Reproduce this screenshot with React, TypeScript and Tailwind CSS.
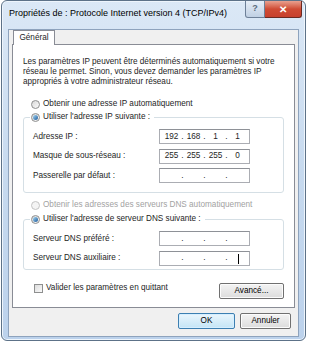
import React from "react";

const font = { fontFamily: '"Liberation Sans", Arial, sans-serif' };

function Radio({ checked, disabled }: { checked?: boolean; disabled?: boolean }) {
  return (
    <span
      className={`flex h-[9px] w-[9px] shrink-0 items-center justify-center rounded-full border ${
        disabled ? "border-[#c4c4c4] bg-[#f4f4f4]" : "border-[#8e8f8f] bg-gradient-to-br from-[#d8d8d8] to-[#fbfbfb]"
      }`}
    >
      {checked && <span className="h-[5px] w-[5px] rounded-full bg-gradient-to-br from-[#a6d9f4] to-[#1b5a9a]" />}
    </span>
  );
}

function IpField({ parts }: { parts?: string[] }) {
  const p = parts ?? ["", "", "", ""];
  return (
    <div className="flex h-[15px] w-[91px] items-center border border-[#abadb3] border-t-[#8e9197] bg-white pl-[3px] text-[8.2px] text-[#1e1e1e]">
      {p.map((v, i) => (
        <React.Fragment key={i}>
          <span className="w-[17px] text-center">{v}</span>
          {i < 3 && <span className="w-[5px] text-center">.</span>}
        </React.Fragment>
      ))}
    </div>
  );
}

function Btn({ label, focused, w }: { label: string; focused?: boolean; w: string }) {
  return (
    <div
      className={`flex h-[16px] ${w} items-center justify-center rounded-[2px] border text-[8.2px] text-black ${
        focused
          ? "border-[#3c7fb1] bg-gradient-to-b from-[#eaf6fd] to-[#c4e5f6] shadow-[inset_0_0_0_1px_#d6efff]"
          : "border-[#707070] bg-gradient-to-b from-[#f4f4f4] to-[#dcdcdc] shadow-[inset_0_0_0_1px_#fcfcfc]"
      }`}
    >
      {label}
    </div>
  );
}

function Row({ label, field }: { label: string; field: React.ReactNode }) {
  return (
    <div className="flex h-[19.5px] items-center justify-between pl-[9px] pr-[33px]">
      <span>{label}</span>
      {field}
    </div>
  );
}

export default function App() {
  return (
    <div className="h-[344px] w-[309px] overflow-hidden bg-white" style={font}>
      <div className="ml-[1px] flex h-[341px] w-[305px] flex-col rounded-[6px] border border-[#5d7288] bg-gradient-to-b from-[#dbe8f6] via-[#c7daef] to-[#bcd2ec] px-[6px] pb-[3px] shadow-[inset_0_0_0_1px_#eef5fc]">
        <div className="flex h-[28px] shrink-0 items-start justify-between">
          <span className="pl-[1px] pt-[6px] text-[9px] text-black">
            Propriétés de : Protocole Internet version 4 (TCP/IPv4)
          </span>
          <div className="mr-[-3px] flex">
            <div className="flex h-[17px] w-[20px] items-center justify-center rounded-bl-[3px] border border-t-0 border-[#6d8098] bg-gradient-to-b from-[#e6eef7] to-[#c0d0e3] text-[9px] font-bold text-[#5b6b7c]">
              ?
            </div>
            <div className="flex h-[17px] w-[37px] items-center justify-center rounded-br-[3px] border border-l-0 border-t-0 border-[#6a2a22] bg-gradient-to-b from-[#e8a08f] via-[#cf4b34] to-[#c7402d] text-[10px] font-bold text-white">
              ✕
            </div>
          </div>
        </div>
        <div className="flex flex-1 flex-col border border-[#8ea3bd] bg-[#f0f0f0] px-[3px] text-[8.2px] text-[#1e1e1e]">
          <div className="flex">
            <div className="relative z-10 -mb-px ml-[1px] flex h-[15px] w-[42px] items-center justify-center border border-b-0 border-[#898c95] bg-white">
              Général
            </div>
          </div>
          <div className="h-[264px] border border-[#898c95] bg-white pl-[10px] pr-[10px] pt-[12px]">
            <p className="w-[262px] leading-[10px]">
              Les paramètres IP peuvent être déterminés automatiquement si votre réseau le permet. Sinon, vous devez demander les paramètres IP appropriés à votre administrateur réseau.
            </p>
            <div className="mt-[12px] flex h-[10px] items-center gap-[3px] pl-[8px]">
              <Radio />
              <span>Obtenir une adresse IP automatiquement</span>
            </div>
            <div className="relative mt-[8px] h-[76px] rounded-[3px] border border-[#d5dfe5] pt-[9px]">
              <div className="absolute left-[6px] top-[-6px] flex h-[10px] items-center gap-[3px] bg-white pl-[1px] pr-[4px]">
                <Radio checked />
                <span>Utiliser l'adresse IP suivante :</span>
              </div>
              <Row label="Adresse IP :" field={<IpField parts={["192", "168", "1", "1"]} />} />
              <Row label="Masque de sous-réseau :" field={<IpField parts={["255", "255", "255", "0"]} />} />
              <Row label="Passerelle par défaut :" field={<IpField />} />
            </div>
            <div className="mt-[7px] flex h-[10px] items-center gap-[3px] pl-[8px] text-[#a2a2a2]">
              <Radio disabled />
              <span>Obtenir les adresses des serveurs DNS automatiquement</span>
            </div>
            <div className="relative mt-[9px] h-[51px] rounded-[3px] border border-[#d5dfe5] pt-[9px]">
              <div className="absolute left-[6px] top-[-6px] flex h-[10px] items-center gap-[3px] bg-white pl-[1px] pr-[4px]">
                <Radio checked />
                <span>Utiliser l'adresse de serveur DNS suivante :</span>
              </div>
              <Row label="Serveur DNS préféré :" field={<IpField />} />
              <div className="relative">
                <Row label="Serveur DNS auxiliaire :" field={<IpField />} />
                <span className="absolute right-[44px] top-[5px] h-[10px] w-px bg-black" />
              </div>
            </div>
            <div className="mt-[13px] flex items-start justify-between pl-[11px]">
              <div className="flex h-[10px] items-center gap-[3px]">
                <span className="h-[9px] w-[9px] border border-[#8e8f8f] bg-gradient-to-br from-[#dcdcdc] to-[#fafafa]" />
                <span>Valider les paramètres en quittant</span>
              </div>
              <Btn label="Avancé..." w="w-[65px]" />
            </div>
          </div>
          <div className="mt-[5px] flex justify-end gap-[5px] pr-[4px]">
            <Btn label="OK" focused w="w-[57px]" />
            <Btn label="Annuler" w="w-[51px]" />
          </div>
        </div>
      </div>
    </div>
  );
}
